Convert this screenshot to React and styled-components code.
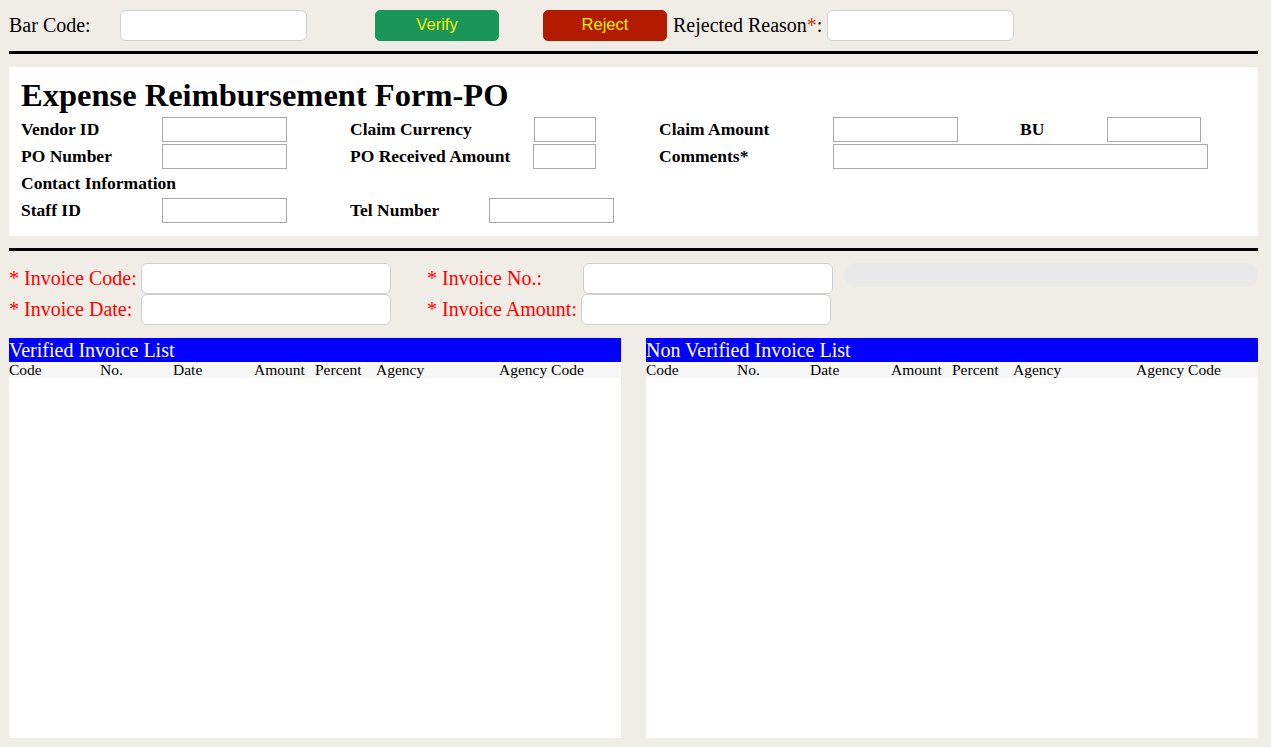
import React from 'react'
import styled, { createGlobalStyle } from 'styled-components'

const GlobalStyle = createGlobalStyle`
  html, body {
    margin: 0;
    padding: 0;
    background: #f0ede6;
    font-family: "Liberation Serif", "Times New Roman", serif;
    color: #000;
  }
`

const Page = styled.div`
  width: 1249px;
  padding: 0 0 9px 9px;
`

const TopBar = styled.div`
  display: flex;
  align-items: center;
  height: 31px;
  padding-top: 10px;
  font-size: 20px;
`

const TopLabel = styled.span`
  width: ${p => p.w || 'auto'};
  margin-right: ${p => p.mr || '0'};
`

const Star = styled.span`
  color: #c0392b;
`

const RoundInput = styled.input`
  box-sizing: border-box;
  width: ${p => p.w || '187px'};
  height: 31px;
  border: 1px solid #cfcfcf;
  border-radius: 6px;
  background: #fff;
  margin-left: ${p => p.ml || '0'};
  outline: none;
`

const ActionButton = styled.button`
  box-sizing: border-box;
  width: 124px;
  height: 31px;
  border: 1px solid ${p => p.bg};
  border-radius: 5px;
  background: ${p => p.bg};
  color: #f4f10a;
  font-family: "Liberation Sans", Arial, sans-serif;
  font-size: 16.5px;
  margin-left: ${p => p.ml};
  margin-right: ${p => p.mr || '0'};
  padding: 0 0 2px;
`

const Rule = styled.hr`
  margin: ${p => p.mt} 0 0;
  height: 3px;
  border: 0;
  background: #000;
`

const Panel = styled.div`
  margin-top: 13px;
  height: 169px;
  box-sizing: border-box;
  background: #fff;
  padding: 11px 12px 0;
`

const Title = styled.h1`
  margin: 0;
  font-size: 32.5px;
  line-height: 34px;
  font-weight: bold;
`

const FormGrid = styled.div`
  display: grid;
  grid-template-columns: ${p => p.cols};
  grid-auto-rows: 27px;
  align-items: center;
  margin-top: ${p => p.mt || '0'};
  font-size: 17.5px;
  font-weight: bold;
  white-space: nowrap;
`

const FormLabel = styled.div`
  grid-column: ${p => p.col || 'auto'};
`

const BoxInput = styled.input`
  box-sizing: border-box;
  width: ${p => p.w};
  height: 25px;
  border: 1px solid #a9a9a9;
  border-radius: 0;
  background: #fff;
  justify-self: ${p => p.js || 'start'};
  grid-column: ${p => p.col || 'auto'};
  outline: none;
`

const InvoiceGrid = styled.div`
  display: grid;
  grid-template-columns: 132px 250px 36px 156px 250px 11px 414px;
  grid-template-rows: 31px 31px;
  align-items: center;
  margin-top: 12px;
  font-size: 20px;
  color: #ff0000;
  white-space: nowrap;
`

const Progress = styled.div`
  grid-column: 7;
  grid-row: 1;
  align-self: start;
  height: 24px;
  border-radius: 12px;
  background: #e9e9e9;
`

const Lists = styled.div`
  display: grid;
  grid-template-columns: 612px 612px;
  column-gap: 25px;
  margin-top: 13px;
`

const ListBox = styled.div`
  height: 400px;
  background: #fff;
`

const ListTitle = styled.div`
  height: 24px;
  line-height: 24px;
  background: #0000ff;
  color: #fff;
  font-size: 20px;
`

const ColumnRow = styled.div`
  display: grid;
  grid-template-columns: 91px 73px 81px 61px 61px 123px 1fr;
  height: 16px;
  line-height: 16px;
  background: #f7f7f7;
  font-size: 15.5px;
  white-space: nowrap;
`

const columns = ['Code', 'No.', 'Date', 'Amount', 'Percent', 'Agency', 'Agency Code']

const InvoiceList = ({ title }) => (
  <ListBox>
    <ListTitle>{title}</ListTitle>
    <ColumnRow>
      {columns.map(c => <span key={c}>{c}</span>)}
    </ColumnRow>
  </ListBox>
)

export default function App() {
  return (
    <>
      <GlobalStyle />
      <Page>
        <TopBar>
          <TopLabel w="111px">Bar Code:</TopLabel>
          <RoundInput />
          <ActionButton bg="#1a9658" ml="68px">Verify</ActionButton>
          <ActionButton bg="#b31b00" ml="44px" mr="6px">Reject</ActionButton>
          <TopLabel mr="5px">Rejected Reason<Star>*</Star>:</TopLabel>
          <RoundInput />
        </TopBar>
        <Rule mt="10px" />

        <Panel>
          <Title>Expense Reimbursement Form-PO</Title>
          <FormGrid mt="4px" cols="141px 188px 183px 126px 174px 187px 87px 1fr">
            <FormLabel>Vendor ID</FormLabel>
            <BoxInput w="125px" />
            <FormLabel>Claim Currency</FormLabel>
            <BoxInput w="62px" js="end" style={{ marginRight: '63px' }} />
            <FormLabel>Claim Amount</FormLabel>
            <BoxInput w="125px" />
            <FormLabel>BU</FormLabel>
            <BoxInput w="94px" />

            <FormLabel>PO Number</FormLabel>
            <BoxInput w="125px" />
            <FormLabel>PO Received Amount</FormLabel>
            <BoxInput w="63px" />
            <FormLabel>Comments*</FormLabel>
            <BoxInput w="375px" col="6 / 9" />

            <FormLabel col="1 / 4">Contact Information</FormLabel>
          </FormGrid>
          <FormGrid cols="141px 188px 139px 1fr">
            <FormLabel>Staff ID</FormLabel>
            <BoxInput w="125px" />
            <FormLabel>Tel Number</FormLabel>
            <BoxInput w="125px" />
          </FormGrid>
        </Panel>
        <Rule mt="12px" />

        <InvoiceGrid>
          <span>* Invoice Code:</span>
          <RoundInput w="250px" />
          <span />
          <span>* Invoice No.:</span>
          <RoundInput w="250px" />
          <span />
          <Progress />

          <span>* Invoice Date:</span>
          <RoundInput w="250px" />
          <span />
          <span>* Invoice Amount:</span>
          <RoundInput w="250px" style={{ marginLeft: '-2px' }} />
        </InvoiceGrid>

        <Lists>
          <InvoiceList title="Verified Invoice List" />
          <InvoiceList title="Non Verified Invoice List" />
        </Lists>
      </Page>
    </>
  )
}
